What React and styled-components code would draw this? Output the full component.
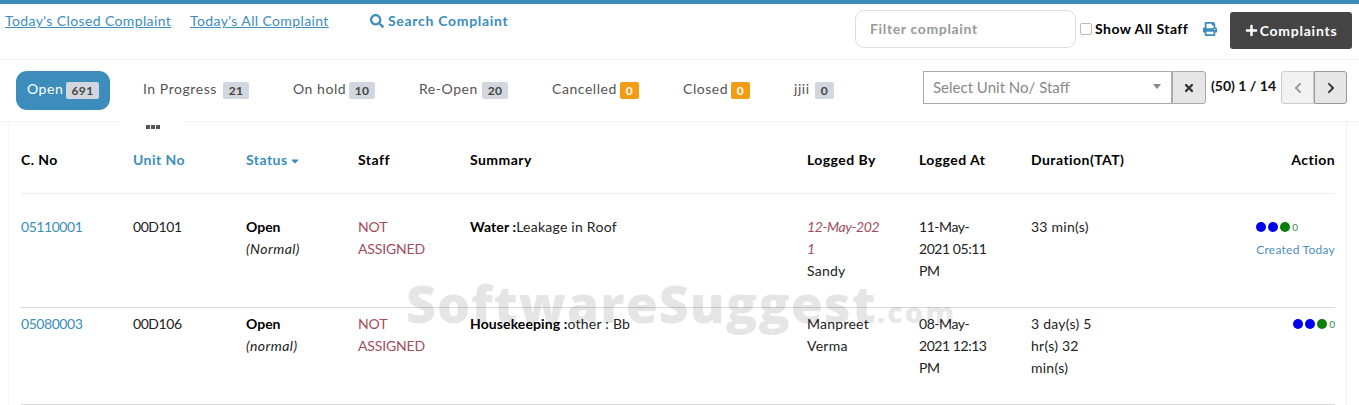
import React from 'react'
import styled, { createGlobalStyle } from 'styled-components'
import { FaSearch, FaPrint, FaPlus, FaTimes, FaChevronLeft, FaChevronRight, FaCaretDown } from 'react-icons/fa'

const GlobalStyle = createGlobalStyle`
  html, body { margin: 0; padding: 0; background: #fff; }
  body { font-family: "Lato", "Liberation Sans", sans-serif; font-size: 14px; color: #111; overflow: hidden; }
  * { box-sizing: border-box; }
`

const Page = styled.div`
  position: relative;
  width: 1359px;
  height: 405px;
  overflow: hidden;
  border-top: 4px solid #3c8dbc;
`

const TopBar = styled.div`
  height: 56px;
  display: flex;
  align-items: flex-start;
  border-bottom: 1px solid #f0f0f0;
  padding-left: 5px;
`

const TopLink = styled.a`
  color: #3c8dbc;
  text-decoration: underline;
  font-size: 14px;
  letter-spacing: 0.38px;
  line-height: 20px;
  margin-top: 7px;
  margin-right: ${p => p.$gap}px;
  width: ${p => p.$width}px;
  white-space: nowrap;
`

const SearchLink = styled.a`
  display: flex;
  align-items: center;
  gap: 4px;
  color: #3c8dbc;
  font-weight: 700;
  font-size: 14px;
  letter-spacing: 0.7px;
  line-height: 20px;
  margin-top: 7px;
  width: 485px;
  white-space: nowrap;
  svg { width: 14px; height: 14px; }
`

const FilterInput = styled.div`
  width: 221px;
  height: 38px;
  margin-top: 6px;
  border: 1px solid #ddd;
  border-radius: 9px;
  padding: 0 14px;
  line-height: 36px;
  font-size: 14px;
  font-weight: 700;
  letter-spacing: 0.65px;
  color: #999;
`

const ShowAll = styled.label`
  display: flex;
  align-items: center;
  margin: 15px 0 0 4px;
  width: 123px;
  font-weight: 700;
  font-size: 14px;
  letter-spacing: 0.45px;
  line-height: 20px;
  color: #000;
  white-space: nowrap;
`

const CheckBox = styled.span`
  width: 12px;
  height: 12px;
  margin-right: 3px;
  border: 1px solid #bbb;
  border-radius: 2px;
  background: #fff;
`

const PrintIcon = styled(FaPrint)`
  width: 14px;
  height: 14px;
  margin-top: 18px;
  color: #3c8dbc;
`

const AddButton = styled.button`
  display: flex;
  align-items: center;
  justify-content: center;
  gap: 2px;
  width: 122px;
  height: 37px;
  margin: 8px 0 0 13px;
  padding: 0;
  border: 0;
  border-radius: 3px;
  background: #444;
  color: #fff;
  font-family: inherit;
  font-size: 14px;
  font-weight: 700;
  letter-spacing: 0.75px;
  svg { width: 13px; height: 13px; }
`

const TabBar = styled.div`
  height: 62px;
  display: flex;
  align-items: flex-start;
  padding: 11px 0 0 16px;
  border-bottom: 1px solid #f0f0f0;
`

const Tabs = styled.div`
  width: 907px;
  display: flex;
  gap: 22px;
`

const Tab = styled.a`
  display: flex;
  align-items: center;
  height: 39px;
  padding: 0 11px;
  border-radius: 11px;
  font-size: 14px;
  letter-spacing: 0.55px;
  white-space: nowrap;
  background: ${p => (p.$active ? '#3c8dbc' : 'transparent')};
  color: ${p => (p.$active ? '#fff' : '#555')};
`

const TabLabel = styled.span`
  width: ${p => p.$width}px;
  margin-top: -4px;
`

const Badge = styled.span`
  width: ${p => p.$width}px;
  height: 17px;
  border-radius: 2px;
  background: ${p => (p.$warn ? '#f39c12' : '#d2d6de')};
  color: ${p => (p.$warn ? '#fff' : '#444')};
  font-size: 12px;
  font-weight: 700;
  letter-spacing: 0.3px;
  line-height: 17px;
  text-align: center;
`

const SelectBox = styled.div`
  width: 249px;
  height: 33px;
  display: flex;
  align-items: center;
  justify-content: space-between;
  padding: 0 10px 2px 9px;
  border: 1px solid #aaa;
  font-size: 15px;
  color: #888;
`

const Caret = styled.span`
  width: 0;
  height: 0;
  border-left: 4px solid transparent;
  border-right: 4px solid transparent;
  border-top: 5px solid #888;
`

const ClearButton = styled.button`
  width: 34px;
  height: 33px;
  padding: 0;
  border: 1px solid #aaa;
  border-radius: 0 3px 3px 0;
  background: #e6e6e6;
  color: #333;
  svg { width: 12px; height: 12px; display: block; margin: auto; }
`

const PageInfo = styled.span`
  width: 75px;
  padding-left: 5px;
  line-height: 30px;
  font-size: 14px;
  font-weight: 700;
  letter-spacing: 0;
  color: #111;
  white-space: nowrap;
`

const Pager = styled.div`
  display: flex;
`

const PagerButton = styled.button`
  width: 33px;
  height: 33px;
  padding: 0;
  border: 1px solid ${p => (p.disabled ? '#ccc' : '#999')};
  border-radius: ${p => (p.$first ? '3px 0 0 3px' : '0 3px 3px 0')};
  background: ${p => (p.disabled ? '#f2f2f2' : '#e6e6e6')};
  color: ${p => (p.disabled ? '#999' : '#333')};
  svg { width: 12px; height: 12px; display: block; margin: auto; }
`

const MoreTab = styled.div`
  position: absolute;
  left: 120px;
  top: 117px;
  width: 65px;
  height: 12px;
  padding-top: 4px;
  display: flex;
  justify-content: center;
  gap: 1px;
  background: #fff;
`

const MoreDot = styled.span`
  width: 4px;
  height: 4px;
  background: #555;
`

const TableWrap = styled.div`
  margin: 0 12px 0 8px;
  padding: 0 11px 0 12px;
  border-left: 1px solid #f6f6f6;
  border-right: 1px solid #f0f0f0;
  height: 300px;
`

const Row = styled.div`
  display: grid;
  grid-template-columns: 112px 113px 112px 112px 337px 112px 112px 112px 1fr;
  padding: ${p => p.$top}px 0 ${p => p.$bottom}px;
  border-bottom: 1px solid ${p => (p.$strong ? '#d8d8d8' : '#eee')};
  line-height: 22px;
  font-size: 14px;
`

const HeadCell = styled.div`
  font-weight: 700;
  letter-spacing: 0.45px;
  color: ${p => (p.$link ? '#3c8dbc' : '#000')};
  text-align: ${p => (p.$right ? 'right' : 'left')};
  svg { width: 12px; height: 12px; margin-left: 1px; vertical-align: -2px; }
`

const Cell = styled.div`
  padding-right: 34px;
  letter-spacing: ${p => (p.$tight ? '-0.45px' : '0.25px')};
  color: ${p => p.$color || '#222'};
`

const WideCell = styled(Cell)`
  padding-right: 10px;
`

const StaffCell = styled(Cell)`
  letter-spacing: -0.15px;
  color: #a34c58;
`

const Strong = styled.div`
  font-weight: 700;
  letter-spacing: 0;
  color: #000;
`

const Note = styled.div`
  font-style: italic;
  letter-spacing: 0.45px;
  color: #222;
`

const LoggedDate = styled.div`
  font-style: italic;
  letter-spacing: -0.4px;
  color: #a34c58;
  word-break: break-all;
`

const Inline = styled.span`
  font-weight: 700;
  letter-spacing: 0.1px;
  color: #000;
`

const ActionCell = styled.div`
  display: flex;
  justify-content: flex-end;
`

const DotRow = styled.div`
  display: flex;
  align-items: center;
  gap: 2px;
  height: 22px;
  font-size: 10px;
  color: #3a8a4a;
`

const Dot = styled.span`
  flex: none;
  width: 10px;
  height: 10px;
  border-radius: 50%;
  background: ${p => p.$color};
`

const Created = styled.div`
  margin-top: 1px;
  color: #4f8fbc;
  font-size: 12px;
  letter-spacing: 0.25px;
`

const Watermark = styled.div`
  position: absolute;
  left: 406px;
  top: 264px;
  white-space: nowrap;
  font-family: "Open Sans", sans-serif;
  font-weight: 800;
  font-size: 52px;
  letter-spacing: 1px;
  line-height: 70px;
  color: rgba(0, 0, 0, 0.1);
  pointer-events: none;
  span { font-size: 29px; letter-spacing: 2px; }
`

const tabs = [
  { label: 'Open', count: 691, active: true, labelWidth: 39, badgeWidth: 33 },
  { label: 'In Progress', count: 21, labelWidth: 80, badgeWidth: 26 },
  { label: 'On hold', count: 10, labelWidth: 56, badgeWidth: 26 },
  { label: 'Re-Open', count: 20, labelWidth: 63, badgeWidth: 26 },
  { label: 'Cancelled', count: 0, warn: true, labelWidth: 68, badgeWidth: 19 },
  { label: 'Closed', count: 0, warn: true, labelWidth: 48, badgeWidth: 19 },
  { label: 'jjii', count: 0, labelWidth: 21, badgeWidth: 19 },
]

const Dots = () => (
  <DotRow>
    <Dot $color="#0000ee" />
    <Dot $color="#0000ee" />
    <Dot $color="#0a7d0a" />
    0
  </DotRow>
)

export default function App() {
  return (
    <Page>
      <GlobalStyle />
      <TopBar>
        <TopLink $width={166} $gap={19}>Today's Closed Complaint</TopLink>
        <TopLink $width={139} $gap={41}>Today's All Complaint</TopLink>
        <SearchLink><FaSearch />Search Complaint</SearchLink>
        <FilterInput>Filter complaint</FilterInput>
        <ShowAll><CheckBox />Show All Staff</ShowAll>
        <PrintIcon />
        <AddButton><FaPlus />Complaints</AddButton>
      </TopBar>
      <TabBar>
        <Tabs>
          {tabs.map(t => (
            <Tab key={t.label} $active={t.active}>
              <TabLabel $width={t.labelWidth}>{t.label}</TabLabel>
              <Badge $warn={t.warn} $width={t.badgeWidth}>{t.count}</Badge>
            </Tab>
          ))}
        </Tabs>
        <SelectBox>Select Unit No/ Staff<Caret /></SelectBox>
        <ClearButton><FaTimes /></ClearButton>
        <PageInfo>(50) 1 / 14</PageInfo>
        <Pager>
          <PagerButton $first disabled><FaChevronLeft /></PagerButton>
          <PagerButton><FaChevronRight /></PagerButton>
        </Pager>
      </TabBar>
      <MoreTab><MoreDot /><MoreDot /><MoreDot /></MoreTab>
      <TableWrap>
        <Row $top={27} $bottom={22}>
          <HeadCell>C. No</HeadCell>
          <HeadCell $link>Unit No</HeadCell>
          <HeadCell $link>Status<FaCaretDown /></HeadCell>
          <HeadCell>Staff</HeadCell>
          <HeadCell>Summary</HeadCell>
          <HeadCell>Logged By</HeadCell>
          <HeadCell>Logged At</HeadCell>
          <HeadCell>Duration(TAT)</HeadCell>
          <HeadCell $right>Action</HeadCell>
        </Row>
        <Row $top={22} $bottom={25} $strong>
          <Cell $color="#3c8dbc" $tight>05110001</Cell>
          <Cell $tight>00D101</Cell>
          <Cell><Strong>Open</Strong><Note>(Normal)</Note></Cell>
          <StaffCell>NOT ASSIGNED</StaffCell>
          <WideCell><Inline>Water :</Inline>Leakage in Roof</WideCell>
          <Cell><LoggedDate>12-May-2021</LoggedDate>Sandy</Cell>
          <Cell $tight>11-May-2021 05:11 PM</Cell>
          <WideCell>33 min(s)</WideCell>
          <ActionCell>
            <div>
              <Dots />
              <Created>Created Today</Created>
            </div>
          </ActionCell>
        </Row>
        <Row $top={5} $bottom={25} $strong>
          <Cell $color="#3c8dbc" $tight>05080003</Cell>
          <Cell $tight>00D106</Cell>
          <Cell><Strong>Open</Strong><Note>(normal)</Note></Cell>
          <StaffCell>NOT ASSIGNED</StaffCell>
          <WideCell><Inline>Housekeeping :</Inline>other : Bb</WideCell>
          <Cell>Manpreet Verma</Cell>
          <Cell $tight>08-May-2021 12:13 PM</Cell>
          <Cell>3 day(s) 5 hr(s) 32 min(s)</Cell>
          <ActionCell><Dots /></ActionCell>
        </Row>
      </TableWrap>
      <Watermark>SoftwareSuggest<span>.com</span></Watermark>
    </Page>
  )
}
